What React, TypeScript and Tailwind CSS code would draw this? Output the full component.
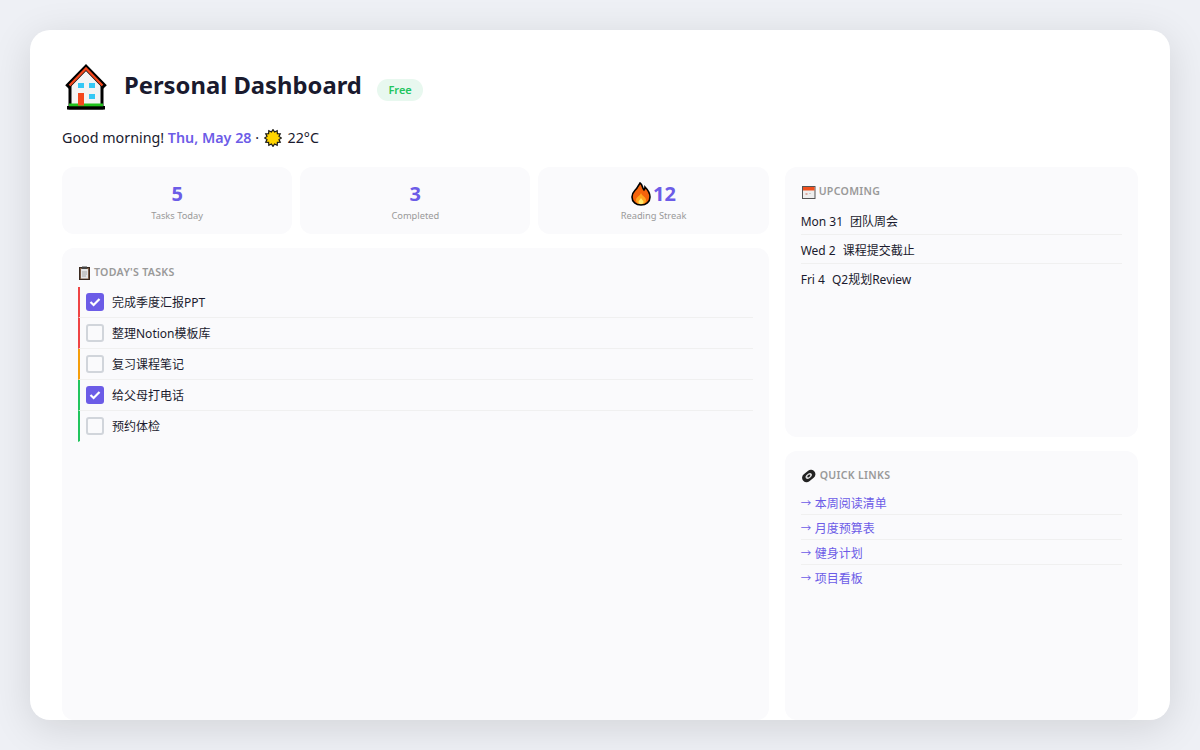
import type { ReactNode } from 'react'

const font = { fontFamily: '"Noto Sans", "Noto Sans CJK SC", sans-serif' }

const tasks = [
  { text: '完成季度汇报PPT', done: true, color: 'border-l-[#ef4444]' },
  { text: '整理Notion模板库', done: false, color: 'border-l-[#ef4444]' },
  { text: '复习课程笔记', done: false, color: 'border-l-[#f59e0b]' },
  { text: '给父母打电话', done: true, color: 'border-l-[#22c55e]' },
  { text: '预约体检', done: false, color: 'border-l-[#22c55e]' },
]

const events = [
  { date: 'Mon 31', title: '团队周会' },
  { date: 'Wed 2', title: '课程提交截止' },
  { date: 'Fri 4', title: 'Q2规划Review' },
]

const links = ['本周阅读清单', '月度预算表', '健身计划', '项目看板']

/* ---- emoji drawings ---- */

function HouseIcon() {
  return (
    <svg width="48" height="48" viewBox="0 0 48 48" className="shrink-0">
      <path d="M8 21 L24 5 L40 21 V46 H8 Z" fill="#f4f4f4" stroke="#000" strokeWidth="3" />
      <path d="M5 25 L24 5.5 L43 25" fill="none" stroke="#000" strokeWidth="5" />
      <path d="M7.5 23.5 L24 6.5 L40.5 23.5" fill="none" stroke="#f4481e" strokeWidth="2.4" />
      <rect x="5" y="44" width="38" height="3.5" fill="#000" />
      <rect x="7" y="41.5" width="34" height="2.8" fill="#22c21e" />
      <rect x="16" y="31" width="6" height="12.5" fill="#f4481e" />
      <rect x="16" y="21" width="6" height="5" fill="#35c8f5" />
      <rect x="27" y="21" width="6" height="5" fill="#35c8f5" />
      <rect x="27" y="32" width="6" height="5" fill="#35c8f5" />
    </svg>
  )
}

function SunIcon() {
  const pts = Array.from({ length: 24 }, (_, i) => {
    const r = i % 2 === 0 ? 8.4 : 6.2
    const a = (i * Math.PI) / 12
    return `${(9 + r * Math.cos(a)).toFixed(2)},${(9 + r * Math.sin(a)).toFixed(2)}`
  }).join(' ')
  return (
    <svg width="18" height="18" viewBox="0 0 18 18" className="mr-[2px] ml-[1px] inline-block align-[-4px]">
      <polygon points={pts} fill="#ffd400" stroke="#1a1a1a" strokeWidth="1.2" />
    </svg>
  )
}

function FireIcon() {
  return (
    <svg width="20" height="24" viewBox="0 0 20 24" className="mr-[2px] shrink-0">
      <path
        d="M9 1 C12 3 11 6 13 8 C14 7 14 6 14 5 C17 8 19 11 19 15 C19 20 15 23 10 23 C5 23 1 20 1 15 C1 10 4 9 6 6 C7 4 8 3 9 1 Z"
        fill="#f4630c"
        stroke="#000"
        strokeWidth="1.6"
      />
      <path d="M10 11 C11 14 15 15 15 18 C15 21 13 22 10 22 C7 22 5 21 5 18 C5 15 9 14 10 11 Z" fill="#ffa51e" />
      <path d="M10 16 C11 18 12.5 18.5 12.5 20 C12.5 21.5 11.5 22 10 22 C8.5 22 7.5 21.5 7.5 20 C7.5 18.5 9 18 10 16 Z" fill="#ffe86b" />
    </svg>
  )
}

function ClipboardIcon() {
  return (
    <svg width="13" height="14" viewBox="0 0 13 14" className="mr-[3px] shrink-0">
      <rect x="1.5" y="1.5" width="10" height="12" fill="#7a5a44" stroke="#3a2a20" />
      <rect x="3" y="3" width="7" height="9.5" fill="#e6e6e6" />
      <rect x="4" y="0.5" width="5" height="2.5" fill="#444" />
      <path d="M4 6 H9 M4 8 H9 M4 10 H8" stroke="#999" strokeWidth="0.8" />
    </svg>
  )
}

function CalendarIcon() {
  return (
    <svg width="15" height="14" viewBox="0 0 15 14" className="mr-[3px] shrink-0">
      <rect x="1.5" y="1.5" width="12.5" height="12" fill="#eeeeee" stroke="#555" />
      <rect x="2" y="2" width="11.5" height="3.5" fill="#f0501e" />
      <rect x="4.5" y="8" width="2" height="2" fill="#d9a9a0" />
      <rect x="8" y="8" width="2" height="1" fill="#ccc" />
    </svg>
  )
}

function LinkIcon() {
  return (
    <svg width="16" height="14" viewBox="0 0 16 14" className="mr-[3px] shrink-0">
      <rect x="0.5" y="2.5" width="14.5" height="9" rx="4.5" transform="rotate(-38 7.75 7)" fill="#222" />
      <ellipse cx="7.75" cy="7" rx="3.6" ry="2.2" transform="rotate(-38 7.75 7)" fill="#ddd" />
      <ellipse cx="7.75" cy="7" rx="1.7" ry="1" transform="rotate(-38 7.75 7)" fill="#222" />
    </svg>
  )
}

/* ---- small pieces ---- */

function Stat({ value, label }: { value: ReactNode; label: string }) {
  return (
    <div className="flex h-[67px] flex-col items-center rounded-xl bg-[#fafafc] pt-[13px]">
      <div className="flex h-[28px] items-center text-[20px] leading-[28px] font-bold text-[#6c5ce7]">{value}</div>
      <div className="mt-[1px] text-[9.3px] leading-[14px] text-[#999]">{label}</div>
    </div>
  )
}

function Heading({ icon, text }: { icon: ReactNode; text: string }) {
  return (
    <div className="mt-[1px] flex h-[16px] items-center text-[10.6px] font-semibold tracking-[0.3px] text-[#999]">
      {icon}
      {text}
    </div>
  )
}

function Check({ done }: { done: boolean }) {
  if (done) {
    return (
      <span className="flex h-[18px] w-[18px] shrink-0 items-center justify-center rounded-[3px] bg-[#6c5ce7]">
        <svg width="14" height="14" viewBox="0 0 14 14" fill="none">
          <path d="M2.5 7 L5.6 10 L11.5 4" stroke="#fff" strokeWidth="2.2" />
        </svg>
      </span>
    )
  }
  return <span className="h-[18px] w-[18px] shrink-0 rounded-[3px] border-2 border-[#d1d5db]" />
}

export default function App() {
  return (
    <div className="h-[750px] w-[1200px] overflow-hidden bg-[#eef0f5] p-[30px]" style={font}>
      <div className="flex h-[690px] flex-col rounded-[20px] bg-white px-8 pt-8 shadow-[0_8px_40px_rgba(0,0,0,0.12)]">
        <div className="flex h-[48px] items-center">
          <HouseIcon />
          <h1 className="ml-[14px] pb-[2px] text-[23.8px] leading-[46px] font-bold text-[#1a1a2e]">Personal Dashboard</h1>
          <span className="mt-[8px] ml-[15px] flex h-[22px] items-center rounded-full bg-[#e8f8ef] px-[11.5px] text-[11px] font-semibold text-[#22c55e]">
            Free
          </span>
        </div>
        <p className="mt-[18px] text-[14.3px] leading-[20px] text-[#1a1a2e]">
          Good morning! <span className="font-semibold text-[#6c5ce7]">Thu, May 28</span> · <SunIcon /> 22°C
        </p>

        <div className="mt-[19px] grid min-h-0 flex-1 grid-cols-[2fr_1fr] gap-x-4">
          <div className="flex min-h-0 flex-col gap-[14px]">
            <div className="grid grid-cols-3 gap-2">
              <Stat value="5" label="Tasks Today" />
              <Stat value="3" label="Completed" />
              <Stat
                value={
                  <>
                    <FireIcon />
                    12
                  </>
                }
                label="Reading Streak"
              />
            </div>
            <div className="flex-1 rounded-xl bg-[#fafafc] p-4">
              <Heading icon={<ClipboardIcon />} text="TODAY'S TASKS" />
              <div className="mt-[6px]">
                {tasks.map((t, i) => (
                  <div
                    key={t.text}
                    className={`flex h-[31px] items-center gap-2 border-b border-l-2 pl-[6px] text-[12px] text-[#1a1a2e] ${t.color} ${
                      i < tasks.length - 1 ? 'border-b-[#f0f0f0]' : 'border-b-transparent'
                    }`}
                  >
                    <Check done={t.done} />
                    <span className="pt-[2px]">{t.text}</span>
                  </div>
                ))}
              </div>
            </div>
          </div>

          <div className="grid min-h-0 grid-rows-2 gap-[14px]">
            <div className="rounded-xl bg-[#fafafc] p-4">
              <Heading icon={<CalendarIcon />} text="UPCOMING" />
              <div className="mt-[6px]">
                {events.map((e, i) => (
                  <div
                    key={e.date}
                    className={`flex h-[29px] items-center gap-[7px] border-b pt-[3px] text-[12px] text-[#1a1a2e] ${
                      i < events.length - 1 ? 'border-[#f0f0f0]' : 'border-transparent'
                    }`}
                  >
                    <span>{e.date}</span>
                    <span>{e.title}</span>
                  </div>
                ))}
              </div>
            </div>
            <div className="rounded-xl bg-[#fafafc] p-4">
              <Heading icon={<LinkIcon />} text="QUICK LINKS" />
              <div className="mt-[6px]">
                {links.map((l, i) => (
                  <div
                    key={l}
                    className={`flex h-[25px] items-center border-b pt-[5px] text-[12px] text-[#6c5ce7] ${
                      i < links.length - 1 ? 'border-[#f0f0f0]' : 'border-transparent'
                    }`}
                  >
                    <span className="w-[14px] text-[10.5px]">→</span>
                    {l}
                  </div>
                ))}
              </div>
            </div>
          </div>
        </div>
      </div>
    </div>
  )
}
